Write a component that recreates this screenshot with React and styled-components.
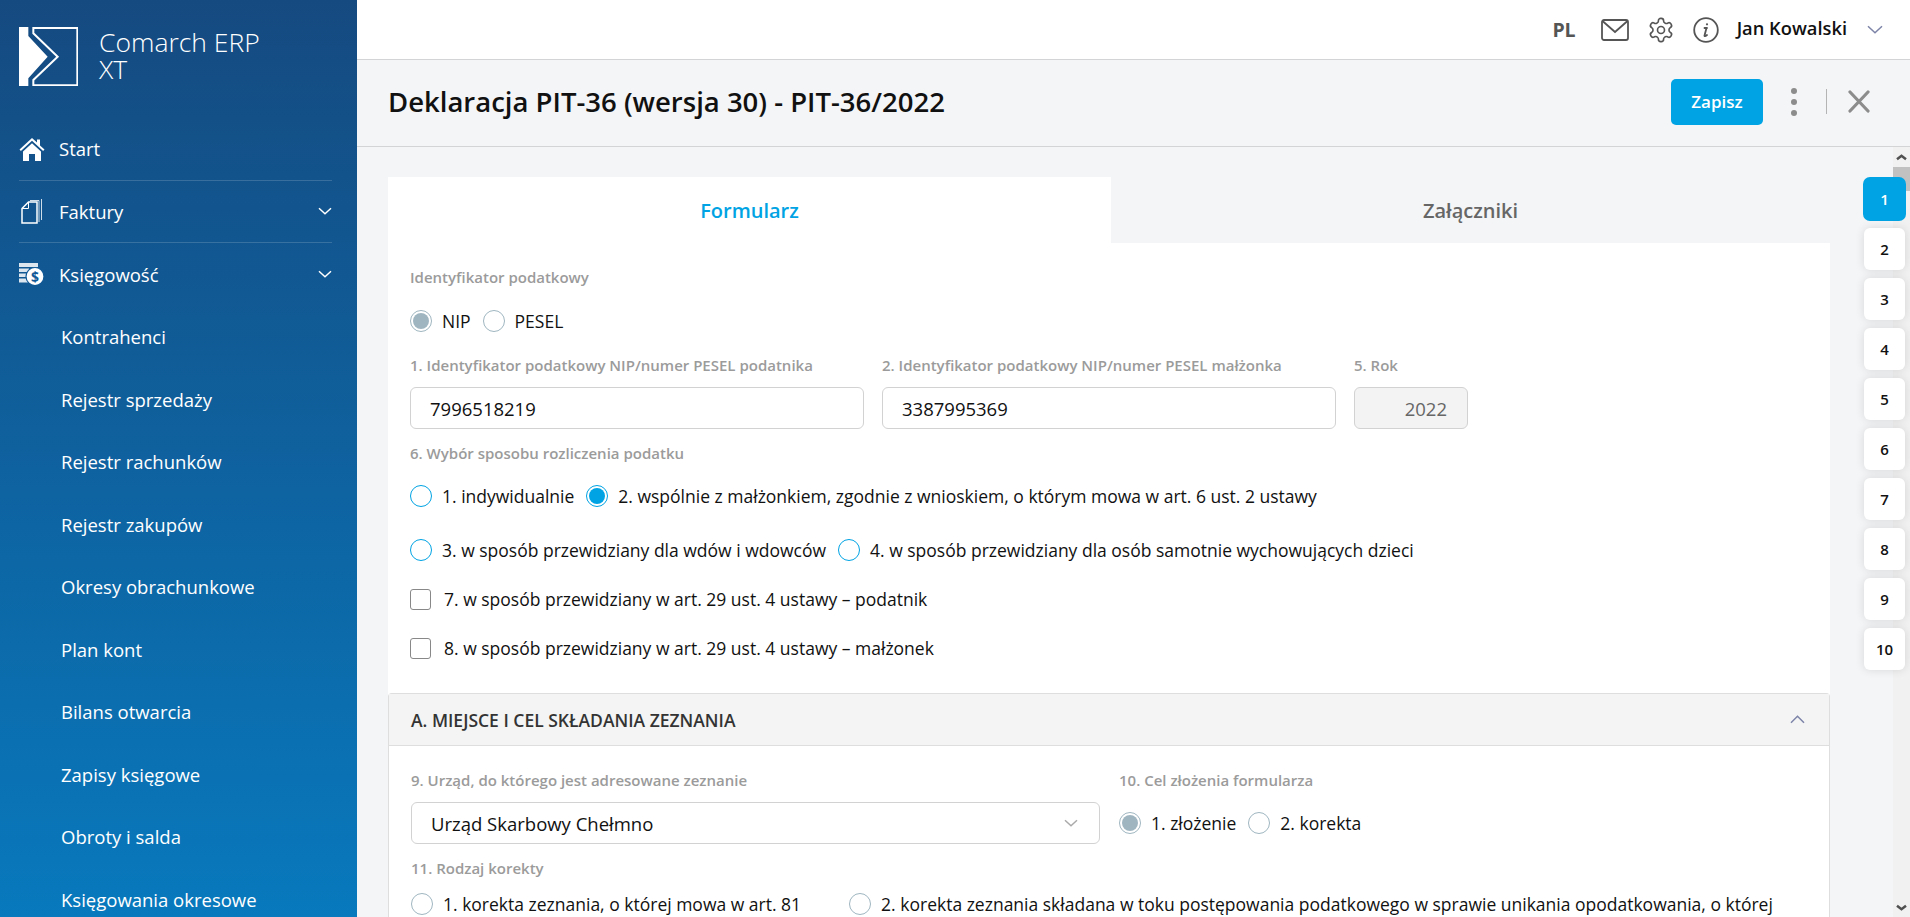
import React from "react";
import styled, { createGlobalStyle } from "styled-components";

const GlobalStyle = createGlobalStyle`
  html, body {
    margin: 0;
    height: 100%;
    overflow: hidden;
    background: #f4f5f7;
    font-family: "Open Sans", "Liberation Sans", sans-serif;
  }
  * { box-sizing: border-box; }
`;

const Page = styled.div`
  display: flex;
  height: 100vh;
  overflow: hidden;
`;

const Sidebar = styled.aside`
  width: 357px;
  flex: none;
  height: 100%;
  overflow: hidden;
  padding: 27px 25px 0 19px;
  color: #fff;
  background: linear-gradient(180deg, #154a80 0%, #0879bd 100%);
`;

const LogoRow = styled.div`
  display: flex;
  align-items: center;
  gap: 21px;
  height: 59px;
  margin-bottom: 32px;
`;

const LogoText = styled.div`
  display: flex;
  flex-direction: column;
  font-size: 26.5px;
  line-height: 26px;
  font-weight: 300;
  margin-top: -2px;

  span {
    height: 27px;
    overflow: visible;
  }
`;

const MenuRow = styled.div`
  display: flex;
  align-items: center;
  height: 62.5px;
  border-bottom: ${(p) => (p.$line ? "1px solid rgba(255,255,255,0.16)" : "none")};
  font-size: 18.5px;
`;

const MenuIcon = styled.span`
  display: flex;
  width: 40px;
  flex: none;
`;

const MenuLabel = styled.span`
  flex: 1;
`;

const SubItem = styled.div`
  display: flex;
  align-items: center;
  height: 62.5px;
  padding-left: 42px;
  font-size: 18.5px;
`;

const Main = styled.main`
  flex: 1;
  min-width: 0;
  display: flex;
  flex-direction: column;
`;

const TopBar = styled.header`
  height: 60px;
  flex: none;
  display: flex;
  align-items: center;
  justify-content: flex-end;
  padding-right: 27px;
  background: #fff;
  border-bottom: 1px solid #d2d4d6;
`;

const Lang = styled.span`
  font-size: 19.5px;
  font-weight: 700;
  color: #555;
  margin-right: 25px;
`;

const TopIcon = styled.span`
  display: flex;
  margin-right: 18px;
  color: #555;
`;

const UserName = styled.span`
  font-size: 18.3px;
  font-weight: 600;
  color: #111;
  margin-right: 20px;
  margin-top: -4px;
`;

const PageHeader = styled.div`
  height: 87px;
  flex: none;
  display: flex;
  align-items: center;
  padding: 0 40px 3px 31px;
  border-bottom: 1px solid #d2d4d6;
`;

const Title = styled.h1`
  flex: 1;
  margin: 0;
  font-size: 27.5px;
  font-weight: 600;
  color: #111;
`;

const SaveButton = styled.button`
  width: 92px;
  height: 46px;
  border: 0;
  border-radius: 5px;
  background: #00a3e3;
  color: #fff;
  font: 600 17px "Open Sans", sans-serif;
`;

const Dots = styled.span`
  display: flex;
  flex-direction: column;
  gap: 5px;
  margin: 0 29px 0 28px;

  i {
    width: 6px;
    height: 6px;
    border-radius: 50%;
    background: #8c8c8c;
  }
`;

const Divider = styled.span`
  width: 1px;
  height: 25px;
  background: #b4b4b4;
  margin-right: 21px;
`;

const ScrollArea = styled.div`
  flex: 1;
  position: relative;
  overflow: hidden;
  padding: 30px 80px 0 31px;
`;

const FakeScrollbar = styled.div`
  position: absolute;
  top: 0;
  right: 0;
  bottom: 0;
  width: 17px;
  background: #f1f1f1;
  display: flex;
  flex-direction: column;
  align-items: center;
`;

const ScrollThumb = styled.div`
  width: 100%;
  height: 24px;
  background: #c1c1c1;
  margin-bottom: auto;
`;

const ScrollArrow = styled.div`
  height: 20px;
  display: flex;
  align-items: center;
  justify-content: center;
`;

const SectionNav = styled.nav`
  position: absolute;
  top: 31px;
  right: 5px;
  display: flex;
  flex-direction: column;
  gap: 8px;
`;

const NavButton = styled.div`
  width: 41px;
  height: 42px;
  border-radius: 6px;
  display: flex;
  align-items: center;
  justify-content: center;
  font-size: 15px;
  font-weight: 600;
  color: ${(p) => (p.$active ? "#fff" : "#111")};
  background: ${(p) => (p.$active ? "#00a3e3" : "#fff")};
  box-shadow: ${(p) => (p.$active ? "0 0 0 1px #00a3e3" : "0 0 10px rgba(0, 0, 0, 0.12)")};
`;

const Tabs = styled.div`
  display: grid;
  grid-template-columns: 723px 1fr;
  height: 66px;
`;

const Tab = styled.div`
  display: flex;
  align-items: center;
  justify-content: center;
  font-size: 20px;
  font-weight: 600;
  color: ${(p) => (p.$active ? "#00a3e3" : "#666")};
  background: ${(p) => (p.$active ? "#fff" : "transparent")};
`;

const Panel = styled.div`
  background: #fff;
  padding-top: 23px;
`;

const FormBody = styled.div`
  padding: 0 22px;
`;

const Label = styled.div`
  font-size: 15px;
  line-height: 22px;
  font-weight: 600;
  color: #9b9b9b;
  margin-top: ${(p) => p.$top || 0}px;
`;

const OptionRow = styled.div`
  display: flex;
  align-items: center;
  height: ${(p) => p.$height || 54}px;
  margin-top: ${(p) => p.$top || 0}px;
  gap: 12px;
  white-space: nowrap;
`;

const Option = styled.label`
  display: flex;
  align-items: center;
  gap: 10px;
  font-size: 17.5px;
  color: #111;
  margin-left: ${(p) => p.$left || 0}px;
`;

const Radio = styled.span`
  width: 22px;
  height: 22px;
  flex: none;
  border-radius: 50%;
  background: #fff;
  border: 1px solid ${(p) => (p.$muted ? "#9fb6c1" : "#00a3e3")};
  display: flex;
  align-items: center;
  justify-content: center;

  &::after {
    content: "";
    width: 16px;
    height: 16px;
    border-radius: 50%;
    display: ${(p) => (p.$on ? "block" : "none")};
    background: ${(p) => (p.$muted ? "#9fb6c1" : "#00a3e3")};
  }
`;

const CheckBox = styled.span`
  width: 21px;
  height: 21px;
  flex: none;
  margin-right: 3px;
  border: 1px solid #888;
  border-radius: 3px;
  background: #fff;
`;

const FieldGrid = styled.div`
  display: grid;
  grid-template-columns: 454px 454px 114px;
  column-gap: 18px;
`;

const Field = styled.div`
  display: flex;
  flex-direction: column;
  gap: 11px;
`;

const Input = styled.div`
  height: 42px;
  display: flex;
  align-items: center;
  justify-content: ${(p) => (p.$disabled ? "flex-end" : "flex-start")};
  padding: 0 ${(p) => (p.$disabled ? "20px" : "19px")};
  border: 1px solid #d2d2d2;
  border-radius: 6px;
  font-size: 18.5px;
  color: ${(p) => (p.$disabled ? "#666" : "#111")};
  background: ${(p) => (p.$disabled ? "#f3f3f3" : "#fff")};
`;

const Section = styled.section`
  margin-top: 18px;
  border: 1px solid #dedede;
  border-bottom: 0;
  border-radius: 4px 4px 0 0;
`;

const SectionHead = styled.div`
  height: 52px;
  display: flex;
  align-items: center;
  justify-content: space-between;
  padding: 0 24px 0 22px;
  background: #f4f4f4;
  border-bottom: 1px solid #dedede;
  font-size: 17.5px;
  font-weight: 600;
  color: #333;
`;

const SectionBody = styled.div`
  padding: 23px 22px 0;
`;

const SplitRow = styled.div`
  display: grid;
  grid-template-columns: 689px 1fr;
  column-gap: 19px;
`;

const Select = styled(Input)`
  justify-content: space-between;
  padding: 0 21px 0 19px;
`;

// chevron drawn to its exact visible size, no empty margin round it
function Chevron({ w, h, up, color = "#fff", stroke = 1.5 }) {
  const top = stroke / 2 + 0.5;
  const bottom = h - stroke / 2 - 0.5;
  const points = up
    ? `1,${bottom} ${w / 2},${top} ${w - 1},${bottom}`
    : `1,${top} ${w / 2},${bottom} ${w - 1},${top}`;
  return (
    <svg width={w} height={h} viewBox={`0 0 ${w} ${h}`} fill="none" stroke={color} strokeWidth={stroke}>
      <polyline points={points} />
    </svg>
  );
}

const subItems = [
  "Kontrahenci",
  "Rejestr sprzedaży",
  "Rejestr rachunków",
  "Rejestr zakupów",
  "Okresy obrachunkowe",
  "Plan kont",
  "Bilans otwarcia",
  "Zapisy księgowe",
  "Obroty i salda",
  "Księgowania okresowe",
];

export default function App() {
  return (
    <>
      <GlobalStyle />
      <Page>
        <Sidebar>
          <LogoRow>
            <svg width="59" height="59" viewBox="0 0 177 177">
              <path d="M0 0H28V27L86 89 28 154V177H0Z" fill="#fff" />
              <path d="M43 3H175V175H43V159L116 89 43 19Z" fill="none" stroke="#fff" strokeWidth="6" />
            </svg>
            <LogoText>
              <span>Comarch ERP</span>
              <span>XT</span>
            </LogoText>
          </LogoRow>
          <MenuRow $line>
            <MenuIcon>
              <svg width="26" height="24" viewBox="0 0 26 24" fill="#fff">
                <path d="M13 1 0.5 12.5l1.4 1.4L13 3.7l11.1 10.2 1.4-1.4L21 8.400V2.500h-3v3.100Z" />
                <path d="M4 14.500 13 6.300l9 8.200V24h-6v-7h-6v7H4Z" />
              </svg>
            </MenuIcon>
            <MenuLabel>Start</MenuLabel>
          </MenuRow>
          <MenuRow $line>
            <MenuIcon>
              <svg width="24" height="26" viewBox="0 0 24 26" fill="none" stroke="#fff" strokeWidth="1.500">
                <path d="M3 10.500 9.500 4H18V25H3Z" />
                <path d="M9.500 4V10.500H3" strokeWidth="1" />
                <path d="M20 24V2.500H11M22.500 22V1" strokeWidth="1" opacity="0.8" />
              </svg>
            </MenuIcon>
            <MenuLabel>Faktury</MenuLabel>
            <Chevron w={14} h={8} />
          </MenuRow>
          <MenuRow>
            <MenuIcon>
              <svg width="25" height="22" viewBox="0 0 25 22" fill="#fff">
                <path d="M0 0h19v4H0ZM0 5.500h10v3.500H0ZM0 10.500h8v3.500H0ZM0 15.500h9v4H0Z" opacity="0.85" />
                <circle cx="16" cy="13.500" r="9" stroke="#125a97" strokeWidth="1.200" />
                <text x="16" y="18.500" fontSize="14" fontWeight="700" textAnchor="middle" fill="#125a97" fontFamily="Open Sans">$</text>
              </svg>
            </MenuIcon>
            <MenuLabel>Księgowość</MenuLabel>
            <Chevron w={14} h={8} />
          </MenuRow>
          {subItems.map((item) => (
            <SubItem key={item}>{item}</SubItem>
          ))}
        </Sidebar>
        <Main>
          <TopBar>
            <Lang>PL</Lang>
            <TopIcon>
              <svg width="28" height="22" viewBox="0 0 28 22" fill="none" stroke="#555" strokeWidth="1.800">
                <rect x="1" y="1" width="26" height="20" rx="2" />
                <path d="M1.500 2 14 13 26.500 2" />
              </svg>
            </TopIcon>
            <TopIcon>
              <svg width="28" height="28" viewBox="0 0 24 24" fill="none" stroke="#555" strokeWidth="1.400" strokeLinecap="round" strokeLinejoin="round">
                <path d="M12.220 2h-.44a2 2 0 0 0-2 2v.18a2 2 0 0 1-1 1.730l-.43.250a2 2 0 0 1-2 0l-.150-.080a2 2 0 0 0-2.730.730l-.220.380a2 2 0 0 0 .730 2.730l.150.100a2 2 0 0 1 1 1.720v.510a2 2 0 0 1-1 1.740l-.150.090a2 2 0 0 0-.730 2.730l.220.380a2 2 0 0 0 2.730.730l.150-.080a2 2 0 0 1 2 0l.430.250a2 2 0 0 1 1 1.730V20a2 2 0 0 0 2 2h.440a2 2 0 0 0 2-2v-.180a2 2 0 0 1 1-1.730l.430-.250a2 2 0 0 1 2 0l.150.080a2 2 0 0 0 2.730-.730l.220-.390a2 2 0 0 0-.730-2.730l-.150-.080a2 2 0 0 1-1-1.740v-.500a2 2 0 0 1 1-1.740l.150-.090a2 2 0 0 0 .730-2.730l-.220-.380a2 2 0 0 0-2.730-.730l-.150.080a2 2 0 0 1-2 0l-.430-.250a2 2 0 0 1-1-1.730V4a2 2 0 0 0-2-2z" />
                <circle cx="12" cy="12" r="3" />
              </svg>
            </TopIcon>
            <TopIcon>
              <svg width="26" height="26" viewBox="0 0 26 26" fill="none" stroke="#555" strokeWidth="1.800">
                <circle cx="13" cy="13" r="11.800" />
                <path d="M14 11h-2.500M13.500 11l-2 7.500c-.2.800.6 1 2.500-.5" strokeLinecap="round" />
                <circle cx="14" cy="7.300" r="1.100" fill="#555" stroke="none" />
              </svg>
            </TopIcon>
            <UserName>Jan Kowalski</UserName>
            <Chevron w={16} h={9} color="#7d84a8" />
          </TopBar>
          <PageHeader>
            <Title>Deklaracja PIT-36 (wersja 30) - PIT-36/2022</Title>
            <SaveButton>Zapisz</SaveButton>
            <Dots><i /><i /><i /></Dots>
            <Divider />
            <svg width="22" height="23" viewBox="0 0 22 23" stroke="#8c8c8c" strokeWidth="3.200" strokeLinecap="round">
              <path d="M2 2 20 21M20 2 2 21" />
            </svg>
          </PageHeader>
          <ScrollArea>
            <Tabs>
              <Tab $active>Formularz</Tab>
              <Tab>Załączniki</Tab>
            </Tabs>
            <Panel>
              <FormBody>
                <Label>Identyfikator podatkowy</Label>
                <OptionRow $height={66}>
                  <Option><Radio $on $muted />NIP</Option>
                  <Option><Radio $muted />PESEL</Option>
                </OptionRow>
                <FieldGrid>
                  <Field>
                    <Label>1. Identyfikator podatkowy NIP/numer PESEL podatnika</Label>
                    <Input>7996518219</Input>
                  </Field>
                  <Field>
                    <Label>2. Identyfikator podatkowy NIP/numer PESEL małżonka</Label>
                    <Input>3387995369</Input>
                  </Field>
                  <Field>
                    <Label>5. Rok</Label>
                    <Input $disabled>2022</Input>
                  </Field>
                </FieldGrid>
                <Label $top={13}>6. Wybór sposobu rozliczenia podatku</Label>
                <OptionRow $top={5}>
                  <Option><Radio />1. indywidualnie</Option>
                  <Option><Radio $on />2. wspólnie z małżonkiem, zgodnie z wnioskiem, o którym mowa w art. 6 ust. 2 ustawy</Option>
                </OptionRow>
                <OptionRow>
                  <Option><Radio />3. w sposób przewidziany dla wdów i wdowców</Option>
                  <Option><Radio />4. w sposób przewidziany dla osób samotnie wychowujących dzieci</Option>
                </OptionRow>
                <OptionRow $height={44}>
                  <Option><CheckBox />7. w sposób przewidziany w art. 29 ust. 4 ustawy – podatnik</Option>
                </OptionRow>
                <OptionRow>
                  <Option><CheckBox />8. w sposób przewidziany w art. 29 ust. 4 ustawy – małżonek</Option>
                </OptionRow>
              </FormBody>
              <Section>
                <SectionHead>
                  A. MIEJSCE I CEL SKŁADANIA ZEZNANIA
                  <Chevron w={15} h={9} up color="#7d84a8" />
                </SectionHead>
                <SectionBody>
                  <SplitRow>
                    <Field>
                      <Label>9. Urząd, do którego jest adresowane zeznanie</Label>
                      <Select>
                        Urząd Skarbowy Chełmno
                        <Chevron w={14} h={8} color="#aaa" />
                      </Select>
                    </Field>
                    <Field>
                      <Label>10. Cel złożenia formularza</Label>
                      <OptionRow $height={42}>
                        <Option><Radio $on $muted />1. złożenie</Option>
                        <Option><Radio $muted />2. korekta</Option>
                      </OptionRow>
                    </Field>
                  </SplitRow>
                  <Label $top={13}>11. Rodzaj korekty</Label>
                  <OptionRow $height={50}>
                    <Option><Radio $muted />1. korekta zeznania, o której mowa w art. 81</Option>
                    <Option $left={36}><Radio $muted />2. korekta zeznania składana w toku postępowania podatkowego w sprawie unikania opodatkowania, o której</Option>
                  </OptionRow>
                </SectionBody>
              </Section>
            </Panel>
            <FakeScrollbar>
              <ScrollArrow><Chevron w={11} h={7} up color="#505050" stroke={2.5} /></ScrollArrow>
              <ScrollThumb />
              <ScrollArrow><Chevron w={11} h={7} color="#505050" stroke={2.5} /></ScrollArrow>
            </FakeScrollbar>
            <SectionNav>
              {[1, 2, 3, 4, 5, 6, 7, 8, 9, 10].map((n) => (
                <NavButton key={n} $active={n === 1}>{n}</NavButton>
              ))}
            </SectionNav>
          </ScrollArea>
        </Main>
      </Page>
    </>
  );
}
